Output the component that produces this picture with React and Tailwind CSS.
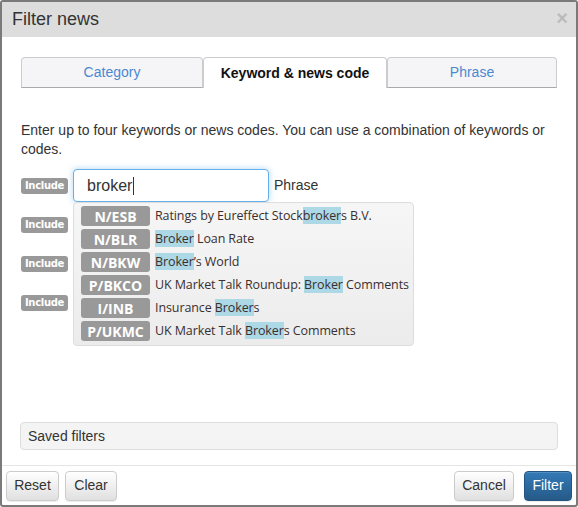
import React from 'react';

const results = [
    { code: 'N/ESB', parts: ['Ratings by Eureffect Stock', 'broker', 's B.V.'] },
    { code: 'N/BLR', parts: ['', 'Broker', ' Loan Rate'] },
    { code: 'N/BKW', parts: ['', 'Broker', '\u2019s World'] },
    { code: 'P/BKCO', parts: ['UK Market Talk Roundup: ', 'Broker', ' Comments'] },
    { code: 'I/INB', parts: ['Insurance ', 'Broker', 's'] },
    { code: 'P/UKMC', parts: ['UK Market Talk ', 'Broker', 's Comments'] },
];

const Badge = () => (
    <span className="w-[47px] h-[16px] rounded-[3px] bg-[#999999] text-white text-[10px] font-bold flex items-center justify-center shrink-0 font-['DejaVu_Sans',sans-serif] tracking-[-0.3px]">
        Include
    </span>
);

// rows 2-4 sit under the suggestion list, so only their badge shows
const KeywordRow = ({ value, focused }) => (
    <div className="flex items-center h-[33px]">
        <Badge />
        {focused && (
            <>
                <div className="ml-[5px] w-[196px] h-[33px] rounded-[4px] border bg-white flex items-center px-[13px] text-[16px] text-[#333] border-[#66afe9] shadow-[0_0_6px_rgba(102,175,233,0.5)]">
                    {value}
                    <span className="w-px h-[18px] bg-[#333] ml-px" />
                </div>
                <span className="ml-[5px] text-[14px] text-[#333]">Phrase</span>
            </>
        )}
    </div>
);

const Button = ({ children, primary, className = '' }) => (
    <button
        className={
            'h-[30px] rounded-[4px] border text-[14px] shadow-[inset_0_1px_0_rgba(255,255,255,0.15),0_1px_1px_rgba(0,0,0,0.075)] ' +
            (primary
                ? 'bg-gradient-to-b from-[#337ab7] to-[#265a88] border-[#245580] text-white '
                : 'bg-gradient-to-b from-white to-[#e0e0e0] border-[#cccccc] text-[#333] ') +
            className
        }
    >
        {children}
    </button>
);

const App = () => {
    return (
        <div className="w-[578px] h-[507px] bg-white border-2 border-[#7a7a7a] rounded-[3px] flex flex-col font-['Liberation_Sans',Arial,sans-serif] overflow-hidden">
            <div className="h-[35px] bg-[#dddddd] flex items-center justify-between pl-[10px] pr-[8px] shrink-0">
                <span className="text-[18px] text-[#333]">Filter news</span>
                <span className="text-[20px] font-bold text-[#bbbbbb] leading-none -mt-[3px]">×</span>
            </div>

            <div className="flex-1 flex flex-col px-[18px] pt-[20px]">
                <div className="flex h-[31px] pl-px">
                    <div className="w-[182px] rounded-t-[4px] border border-[#cccccc] border-b-[#aaaaaa] bg-[#f5f5f7] flex items-center justify-center text-[14px] text-[#4a89d0]">
                        Category
                    </div>
                    <div className="w-[184px] rounded-t-[4px] border border-b-0 border-[#cccccc] bg-white flex items-center justify-center text-[14px] font-bold text-[#111]">
                        Keyword &amp; news code
                    </div>
                    <div className="w-[170px] rounded-t-[4px] border border-[#cccccc] border-b-[#aaaaaa] bg-[#f5f5f7] flex items-center justify-center text-[14px] text-[#4a89d0]">
                        Phrase
                    </div>
                </div>

                <p className="mt-[33px] text-[14px] leading-[19px] text-[#333] pl-px">
                    Enter up to four keywords or news codes. You can use a combination of keywords or codes.
                </p>

                <div className="relative mt-[10px] pl-px flex flex-col gap-[6px]">
                    <KeywordRow value="broker" focused />
                    <KeywordRow />
                    <KeywordRow />
                    <KeywordRow />

                    <div className="absolute left-[53px] top-[33px] w-[341px] rounded-[4px] border border-[#dddddd] bg-gradient-to-b from-[#f6f6f6] to-[#ececec] pt-[3px] pb-[4px] px-[7px] flex flex-col gap-[3px] font-['Open_Sans','Noto_Sans',sans-serif]">
                        {results.map((r) => (
                            <div key={r.code} className="flex items-center h-[20px]">
                                <span className="w-[69px] h-[20px] rounded-[3px] bg-[#999999] text-white text-[14px] font-bold flex items-center justify-center shrink-0">
                                    {r.code}
                                </span>
                                <span className="ml-[5px] text-[12.5px] text-[#3a2f2f] whitespace-nowrap tracking-[-0.1px]">
                                    {r.parts[0]}
                                    <span className="bg-[#add8e6]">{r.parts[1]}</span>
                                    {r.parts[2]}
                                </span>
                            </div>
                        ))}
                    </div>
                </div>

                <div className="mt-auto mb-[15px] h-[28px] rounded-[4px] border border-[#dddddd] bg-[#f4f4f4] flex items-center px-[7px] text-[14px] text-[#333]">
                    Saved filters
                </div>
            </div>

            <div className="h-[40px] border-t border-[#e5e5e5] flex items-center px-[4px] shrink-0">
                <Button className="w-[53px]">Reset</Button>
                <Button className="w-[52px] ml-[6px]">Clear</Button>
                <Button className="w-[60px] ml-auto">Cancel</Button>
                <Button primary className="w-[48px] ml-[10px]">Filter</Button>
            </div>
        </div>
    );
};

export default App;
